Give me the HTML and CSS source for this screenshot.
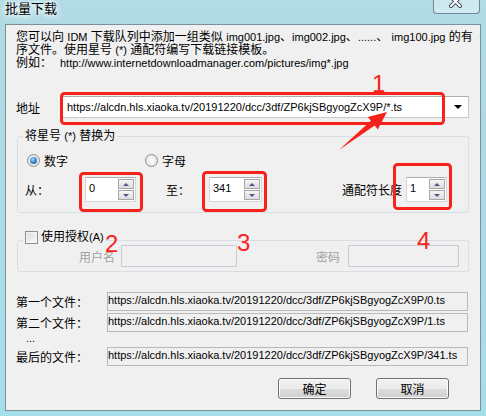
FILE: index.html
```html
<!DOCTYPE html>
<html lang="zh-CN">
<head>
<meta charset="utf-8">
<title>批量下载</title>
<link rel="stylesheet" href="styles.css">
</head>
<body>
<div class="window">
  <div class="titlebar">
    <div class="title">批量下载</div>
    <div class="close">
      <svg width="47" height="13" viewBox="0 0 47 13"><path d="M18 -3 L27 6 M27 -3 L18 6" stroke="#4a5560" stroke-width="4" stroke-linecap="round"/><path d="M18 -3 L27 6 M27 -3 L18 6" stroke="#ffffff" stroke-width="2" stroke-linecap="round"/></svg>
    </div>
  </div>
  <div class="panel">
    <div class="intro">
      您可以向 <span class="en">IDM</span> 下载队列中添加一组类似 <span class="en">img001.jpg</span>、<span class="en">img002.jpg</span>、<span class="en">......</span>、 <span class="en">img100.jpg</span> 的有<br>
      序文件。使用星号 <span class="en">(*)</span> 通配符编写下载链接模板。<br>
      <span class="eg">例如：</span><span class="en">http://www.internetdownloadmanager.com/pictures/img*.jpg</span>
    </div>

    <div class="addr-row">
      <span class="addr-label">地址</span>
      <div class="combo">
        <span class="combo-text">https://alcdn.hls.xiaoka.tv/20191220/dcc/3df/ZP6kjSBgyogZcX9P/*.ts</span>
        <span class="combo-arrow"></span>
      </div>
    </div>

    <fieldset class="group group-replace">
      <legend>将星号 <span class="en">(*)</span> 替换为</legend>
      <div class="radio-row">
        <span class="radio-item first"><span class="radio checked"><span class="dot"></span></span>数字</span>
        <span class="radio-item"><span class="radio"></span>字母</span>
      </div>
      <div class="spin-row">
        <span class="lbl lbl-from">从：</span>
        <div class="spin w51"><span class="spin-val">0</span><span class="spin-btns"><span class="sb up"><i></i></span><span class="sb down"><i></i></span></span></div>
        <span class="lbl lbl-to">至：</span>
        <div class="spin w53"><span class="spin-val">341</span><span class="spin-btns"><span class="sb up"><i></i></span><span class="sb down"><i></i></span></span></div>
        <span class="lbl lbl-len">通配符长度</span>
        <div class="spin w41"><span class="spin-val">1</span><span class="spin-btns"><span class="sb up"><i></i></span><span class="sb down"><i></i></span></span></div>
      </div>
    </fieldset>

    <fieldset class="group group-auth">
      <legend><span class="check"></span>使用授权<span class="en">(A)</span></legend>
      <div class="auth-row">
        <span class="dis-label user">用户名</span>
        <span class="dis-input user-in"></span>
        <span class="dis-label pass">密码</span>
        <span class="dis-input pass-in"></span>
      </div>
    </fieldset>

    <div class="files">
      <div class="file-row"><span class="file-label">第一个文件：</span><span class="file-field">https://alcdn.hls.xiaoka.tv/20191220/dcc/3df/ZP6kjSBgyogZcX9P/0.ts</span></div>
      <div class="file-row second"><span class="file-label">第二个文件：</span><span class="file-field">https://alcdn.hls.xiaoka.tv/20191220/dcc/3df/ZP6kjSBgyogZcX9P/1.ts</span></div>
      <div class="dots">...</div>
      <div class="file-row"><span class="file-label">最后的文件：</span><span class="file-field">https://alcdn.hls.xiaoka.tv/20191220/dcc/3df/ZP6kjSBgyogZcX9P/341.ts</span></div>
    </div>

    <div class="buttons">
      <span class="btn">确定</span>
      <span class="btn">取消</span>
    </div>
  </div>
</div>

<svg class="marks" width="486" height="416" viewBox="0 0 486 416">
  <g fill="none" stroke="#f7231b" stroke-width="3">
    <rect x="61.5" y="93.5" width="382" height="30" rx="3"/>
    <rect x="80.5" y="173.5" width="61" height="37" rx="3"/>
    <rect x="203.5" y="172.5" width="62" height="38" rx="3"/>
    <rect x="394.5" y="164.5" width="56" height="44" rx="3"/>
  </g>
  <polygon fill="#f7231b" points="339,150 370.9,120.8 367.8,116.9 387,112 377.8,129.5 374.7,125.6"/>
</svg>
<div class="num n1">1</div>
<div class="num n2">2</div>
<div class="num n3">3</div>
<div class="num n4">4</div>
</body>
</html>
```

FILE: styles.css
```css
* { box-sizing: border-box; }
html, body { margin: 0; padding: 0; }
body {
  width: 486px;
  height: 416px;
  overflow: hidden;
  position: relative;
  font-family: "Liberation Sans", "Noto Sans CJK SC", sans-serif;
  font-size: 12px;
  color: #000;
  background: linear-gradient(180deg, #b2dbe4 0%, #abdbe6 45%, #a5dfea 100%);
}
.window { width: 486px; height: 416px; }
.en { font-size: 11px; }

.titlebar {
  height: 24px;
  display: flex;
  justify-content: space-between;
  align-items: flex-start;
}
.title {
  padding-left: 5px;
  font-size: 13px;
  line-height: 18px;
  text-shadow: 0 0 4px #ffffff, 0 0 6px #ffffff, 0 0 8px #eaf8fb;
}
.close {
  width: 47px;
  height: 14px;
  margin-right: 6px;
  border: 1px solid #6f8796;
  border-top: none;
  border-radius: 0 0 4px 4px;
  background: linear-gradient(180deg, rgba(255,255,255,0.35), rgba(235,248,252,0.55));
  overflow: hidden;
}
.close svg { display: block; margin-left: -1px; }

.panel {
  margin-left: 5px;
  width: 476px;
  height: 387px;
  border: 1px solid #7d8f9b;
  background: #f0f0f0;
  padding: 6px 11px 0 10px;
}

.intro { line-height: 13px; white-space: nowrap; }
.eg { display: inline-block; width: 44px; }

.addr-row {
  margin-top: 26px;
  display: flex;
  align-items: center;
  height: 22px;
}
.addr-label { width: 45px; flex-shrink: 0; }
.combo {
  flex: 1;
  height: 22px;
  background: #fff;
  border: 1px solid #c4c8ce;
  border-top-color: #abadb3;
  display: flex;
  align-items: center;
  padding-left: 5px;
  font-size: 11px;
}
.combo-text { flex: 1; white-space: nowrap; }
.combo-arrow {
  width: 0; height: 0;
  margin-right: 6px;
  border-left: 4px solid transparent;
  border-right: 4px solid transparent;
  border-top: 4px solid #000;
}

.group {
  margin: 0 0 0 1px;
  border: 1px solid #d5dfe5;
  border-radius: 3px;
  min-width: 0;
}
.group legend {
  padding: 0 2px;
  margin-left: -2px;
  line-height: 16px;
}
.group-replace {
  margin-top: 10px;
  padding: 8px 0 10px 7px;
}
.radio-row { display: flex; height: 16px; align-items: center; }
.radio-item { display: flex; align-items: center; }
.radio-item.first { width: 118px; margin-left: 2px; }
.radio {
  width: 13px; height: 13px;
  border-radius: 50%;
  border: 1px solid #8e8f8f;
  background: radial-gradient(circle at 50% 50%, #ffffff 0, #f2f2f2 40%, #d4d4d4 100%);
  margin-right: 4px;
  display: flex;
  align-items: center;
  justify-content: center;
}
.radio .dot {
  width: 7px; height: 7px; border-radius: 50%;
  background: radial-gradient(circle at 40% 35%, #a9dcf7 0, #3f8ccf 45%, #154e91 100%);
}

.spin-row {
  margin-top: 9px;
  display: flex;
  align-items: center;
  height: 25px;
}
.lbl { flex-shrink: 0; white-space: nowrap; }
.lbl-from { width: 60px; }
.lbl-to { width: 43px; margin-left: 30px; }
.lbl-len { width: 64px; margin-left: 80px; }
.spin {
  height: 25px;
  flex-shrink: 0;
  background: #fff;
  border: 1px solid #d3d6db;
  border-top-color: #abadb3;
  display: flex;
}
.w51 { width: 51px; }
.w53 { width: 53px; }
.w41 { width: 41px; }
.spin-val { flex: 1; padding: 3px 0 0 3px; line-height: 14px; font-size: 11px; }
.spin-btns {
  width: 17px;
  display: flex;
  flex-direction: column;
  padding: 1px 1px 1px 0;
  gap: 1px;
}
.sb {
  flex: 1;
  border: 1px solid #a7a7a7;
  background: linear-gradient(180deg, #f5f5f5, #dcdcdc);
  display: flex;
  align-items: center;
  justify-content: center;
}
.sb i { width: 0; height: 0; border-left: 3px solid transparent; border-right: 3px solid transparent; }
.sb.up i { border-bottom: 3px solid #4b5a8d; }
.sb.down i { border-top: 3px solid #4b5a8d; }

.group-auth {
  margin-top: 16px;
  padding: 0 0 4px 7px;
}
.group-auth legend {
  display: flex;
  align-items: center;
  padding-bottom: 6px;
}
.check {
  width: 13px; height: 13px;
  border: 1px solid #8e8f8f;
  background: linear-gradient(135deg, #dcdcdc, #fbfbfb);
  box-shadow: inset 0 0 0 1px #f4f4f4;
  margin-right: 3px;
}
.auth-row {
  margin-top: -6px;
  display: flex;
  align-items: center;
  height: 22px;
}
.dis-label { color: #a0a0a0; text-align: right; flex-shrink: 0; }
.dis-label.user { width: 90px; margin-right: 6px; }
.dis-label.pass { width: 103px; margin-right: 8px; }
.dis-input {
  height: 22px;
  flex-shrink: 0;
  border: 1px solid #c9cdd2;
  background: #f0f0f0;
  border-radius: 1px;
}
.user-in { width: 116px; }
.pass-in { width: 111px; }

.files { margin-top: 20px; }
.file-row { display: flex; align-items: center; height: 19px; }
.file-row.second { margin-top: 2px; }
.file-label { width: 91px; flex-shrink: 0; white-space: nowrap; }
.file-field {
  flex: 1;
  margin-right: 1px;
  height: 19px;
  border: 1px solid #b9b9b9;
  background: #f0f0f0;
  line-height: 15px;
  font-size: 11px;
  white-space: nowrap;
  overflow: hidden;
}
.dots { height: 15px; line-height: 12px; padding-left: 10px; font-size: 11px; }

.buttons {
  margin-top: 12px;
  display: flex;
  justify-content: flex-end;
  gap: 25px;
  margin-right: 20px;
}
.btn {
  width: 73px;
  height: 21px;
  border: 1px solid #707070;
  border-radius: 3px;
  background: linear-gradient(180deg, #f2f2f2 0%, #ebebeb 50%, #dddddd 51%, #cfcfcf 100%);
  box-shadow: inset 0 0 0 1px #fcfcfc;
  display: flex;
  align-items: center;
  justify-content: center;
}

.marks { position: absolute; left: 0; top: 0; pointer-events: none; }
.num {
  position: absolute;
  font-family: "Liberation Sans", sans-serif;
  font-size: 24px;
  line-height: 1;
  color: #f7231b;
}
.n1 { left: 372px; top: 72px; }
.n2 { left: 105px; top: 232px; }
.n3 { left: 237px; top: 231px; }
.n4 { left: 417px; top: 229px; }
```
